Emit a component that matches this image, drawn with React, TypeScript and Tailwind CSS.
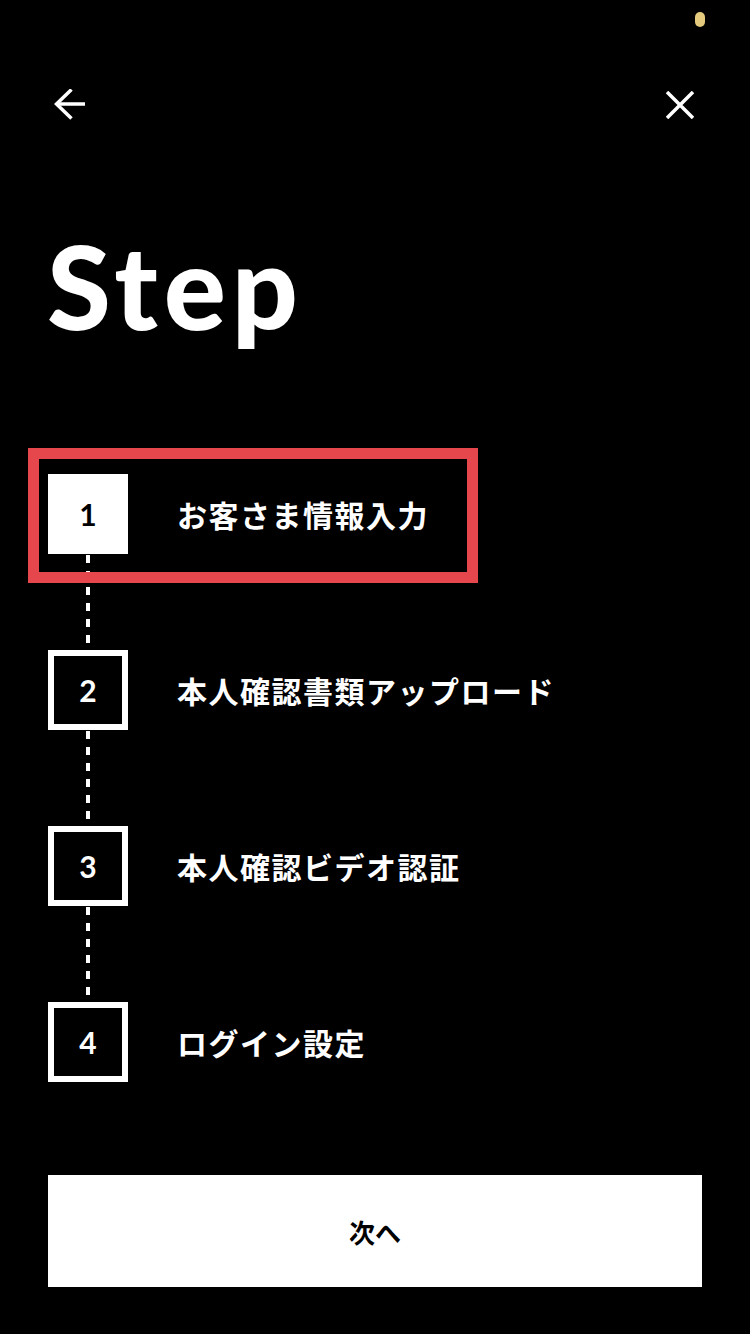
import React from "react";

const steps = [
    "お客さま情報入力",
    "本人確認書類アップロード",
    "本人確認ビデオ認証",
    "ログイン設定",
];

const jp = { fontFamily: '"Noto Sans CJK JP", "Noto Sans", sans-serif' };

const Connector: React.FC = () => (
    <div className="ml-[38px] h-[96px] w-[4px] pt-[1px]">
        <div className="h-full w-full bg-[repeating-linear-gradient(to_bottom,white_0px,white_8px,transparent_8px,transparent_16px)]" />
    </div>
);

const StepRow: React.FC<{ num: number; label: string; active?: boolean }> = ({ num, label, active }) => (
    <div className="relative flex items-center">
        {active && (
            <div className="absolute left-[-20px] top-[-26px] h-[135px] w-[450px] border-[11px] border-[#e5474d]" />
        )}
        <div
            className={
                active
                    ? "flex h-[80px] w-[80px] items-center justify-center bg-white text-black"
                    : "flex h-[80px] w-[80px] items-center justify-center border-[6px] border-white text-white"
            }
        >
            <span className="text-[30px] font-bold leading-none" style={{ fontFamily: "Lato, sans-serif" }}>
                {num}
            </span>
        </div>
        <span className="ml-[49px] text-[30px] font-bold tracking-[1.5px] text-white" style={jp}>
            {label}
        </span>
    </div>
);

export default function App() {
    return (
        <div className="flex h-[1334px] w-[750px] flex-col bg-black">
            {/* status dot */}
            <div className="flex justify-end pr-[45px] pt-[12px]">
                <div className="h-[15px] w-[10px] rounded-full bg-[#e3ca7c]" />
            </div>

            {/* header */}
            <div className="mt-[62px] flex items-center justify-between pl-[54px] pr-[56px]">
                <svg width="32" height="32" viewBox="0 0 32 32" fill="none" stroke="white" strokeWidth="3.5">
                    <path d="M2 15 H31" />
                    <path d="M17.5 0.5 L2.5 15 L17.5 29.5" />
                </svg>
                <svg width="28" height="28" viewBox="0 0 28 28" fill="none" stroke="white" strokeWidth="3.5">
                    <path d="M1 1 L27 27 M27 1 L1 27" />
                </svg>
            </div>

            {/* title */}
            <h1
                className="mt-[107px] h-[116px] pl-[47px] text-[116px] font-black leading-none tracking-[6px] text-white"
                style={{ fontFamily: "Lato, sans-serif" }}
            >
                Step
            </h1>

            {/* steps */}
            <div className="mt-[130px] flex flex-col pl-[48px]">
                {steps.map((label, i) => (
                    <React.Fragment key={label}>
                        {i > 0 && <Connector />}
                        <StepRow num={i + 1} label={label} active={i === 0} />
                    </React.Fragment>
                ))}
            </div>

            {/* button */}
            <div className="mt-[93px] px-[48px]">
                <button
                    className="flex h-[112px] w-full items-center justify-center bg-white text-[26px] font-bold text-black"
                    style={jp}
                >
                    次へ
                </button>
            </div>
        </div>
    );
}
